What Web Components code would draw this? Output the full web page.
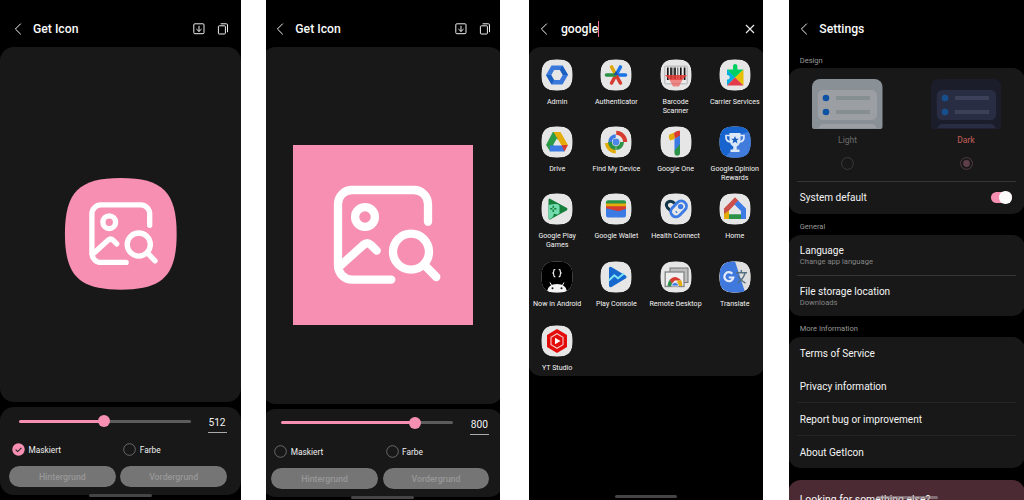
<!DOCTYPE html>
<html lang="en">
<head>
<meta charset="utf-8">
<title>Get Icon</title>
<style>
html,body{margin:0;background:#fff;width:1024px;height:500px;overflow:hidden;font-family:Roboto,"Liberation Sans",sans-serif;color:#fafafa}
screens-row{display:flex;height:500px}
</style>
</head>
<body>
<screens-row>
  <phone-frame style="--w:241px;--gap:24.7px;--inner:241px;--shift:0px">
    <icon-editor size="512" pos="49.3" masked></icon-editor>
  </phone-frame>
  <phone-frame style="--w:234.3px;--gap:29.4px;--inner:241px;--shift:-3.4px">
    <icon-editor size="800" pos="78" second></icon-editor>
  </phone-frame>
  <phone-frame style="--w:233.4px;--gap:26.7px;--inner:237px;--shift:-1.8px">
    <app-search></app-search>
  </phone-frame>
  <phone-frame style="--w:234.5px;--gap:0px;--inner:237px;--shift:-1.2px">
    <settings-page></settings-page>
  </phone-frame>
</screens-row>
<script>
const define=(name,css,html)=>customElements.define(name,class extends HTMLElement{
  connectedCallback(){
    if(this.shadowRoot)return;
    const r=this.attachShadow({mode:'open'});
    r.innerHTML=`<style>*{box-sizing:border-box}${css}</style>`+(typeof html==='function'?html(this):html);
  }
});

define('screens-row',':host{display:flex}','<slot></slot>');

define('phone-frame',`
:host{display:block;flex:none;width:var(--w);height:500px;margin-right:var(--gap);background:#000;overflow:hidden}
div{width:var(--inner);height:500px;margin-left:var(--shift)}`,'<div><slot></slot></div>');

define('top-bar',`
:host{display:flex;height:47px;padding:10px 12px 0 14px;align-items:center;flex:none}
.back{width:8px;height:12px;margin-right:var(--tg,11px);flex:none}
.t{font-size:12.2px;font-weight:500;line-height:16px;flex:1;white-space:nowrap;display:flex;align-items:center}
svg{fill:none;stroke:#f2f2f2;stroke-width:1;display:block}`,
`<svg class="back" viewBox="0 0 8 12"><path d="M6.8 .6 1.4 6 6.8 11.4"/></svg><span class="t"><slot></slot></span><slot name="actions"></slot>`);

// The app's glyph: picture frame with a magnifier, on a pink plate.
define('app-glyph',`:host{display:block}svg{display:block;width:100%;height:100%}`,
el=>`<svg viewBox="0 0 180 180">${el.hasAttribute('masked')
 ?'<path fill="#f68fb1" d="M90 3C155 3 177 25 177 90S155 177 90 177 3 155 3 90 25 3 90 3Z"/>'
 :'<path fill="#f68fb1" d="M0 0H180V180H0Z"/>'}
<g fill="none" stroke="#fff" stroke-width="8.3" stroke-linecap="round" stroke-linejoin="round">
<path d="M135 76.7V59a14 14 0 0 0-14-14H59a14 14 0 0 0-14 14V120.6a14 14 0 0 0 14 14H98.3"/>
<path d="M46 122 70.5 99.8Q74.3 96.7 78 100L83.7 105.6"/><circle cx="72" cy="72" r="9.9"/><circle cx="118" cy="106.7" r="18"/><path d="M131 119.5 143.3 132"/></g></svg>`);

define('check-dot',`
:host{display:flex;align-items:center;gap:3.5px;font-size:8.3px;line-height:12px;color:#f0f0f0}
svg{width:13px;height:13px;display:block}`,
el=>`<svg viewBox="0 0 13 13">${el.hasAttribute('on')
 ?'<circle cx="6.5" cy="6.5" r="6.2" fill="#f68fb1"/><path d="M3.6 6.6 5.7 8.6 9.4 4.8" fill="none" stroke="#222" stroke-width="1.1"/>'
 :'<circle cx="6.5" cy="6.5" r="5.8" fill="none" stroke="#8a8a8a" stroke-width=".7"/>'}</svg><slot></slot>`);

define('size-slider',`
:host{display:flex;align-items:center;width:171.5px;height:12px}
.t{flex:1;height:3px;border-radius:2px;background:linear-gradient(90deg,#f68fb1 var(--p),#5c5c5c var(--p));position:relative}
i{position:absolute;left:var(--p);top:-4.5px;width:12px;height:12px;margin-left:-6px;border-radius:50%;background:#f68fb1}`,
el=>`<div class="t" style="--p:${el.getAttribute('pos')}%"><i></i></div>`);

define('icon-editor',`
:host{display:flex;flex-direction:column;height:500px}
.acts{display:flex;gap:12px;align-items:center}
.acts svg{width:12px;height:12px;fill:none;stroke:#eee;stroke-width:1;display:block}
.stage{background:#181818;border-radius:14px;height:var(--sh);display:flex;justify-content:center;align-items:center;flex:none}
.panel{background:#181818;border-radius:14px;height:88px;margin-top:5px;flex:none;padding:8px 14px 0 9px}
.row{display:flex}
.num{margin-left:17px;width:19px;height:18px;font-size:10.2px;line-height:16px;text-align:center;border-bottom:1px solid #aaa;color:#f2f2f2}
.sl{padding:0 0 0 10px;height:19px}
.ck{padding-left:3px;margin-top:9.3px}
.ck>*{width:111.3px;flex:none}
.bt{gap:4.7px;margin-top:9.5px}
.bt span{flex:1;height:21px;border-radius:11px;background:#757575;color:#989898;font-size:8.8px;font-weight:500;line-height:22px;text-align:center}
.nav{width:63px;height:3px;border-radius:2px;background:#454545;margin:-1px 0 0 89px;flex:none;z-index:1}`,
el=>{const s=el.hasAttribute('second'),m=el.hasAttribute('masked');return `
<top-bar>Get Icon<div class="acts" slot="actions">
<svg viewBox="0 0 12 12"><rect x=".8" y=".8" width="10.2" height="9.9" rx="1"/><path d="M6 2.8V8.4M3.4 6 6 8.5 8.6 6"/></svg>
<svg viewBox="0 0 12 12"><rect x="1.4" y="2.8" width="7" height="8.2" rx=".8"/><path d="M3.6 .8H9.4a1.1 1.1 0 0 1 1.1 1.1V9.2"/></svg></div></top-bar>
<div class="stage" style="--sh:${s?'356.8':'355'}px"><app-glyph ${m?'masked':''} style="${m?'width:115.6px;height:115.6px;margin-top:19px':'width:180px;height:180px;margin-top:19px'}"></app-glyph></div>
<div class="panel"><div class="row sl"><size-slider pos="${el.getAttribute('pos')}"></size-slider><div class="num">${el.getAttribute('size')}</div></div>
<div class="row ck"><check-dot ${m?'on':''}>Maskiert</check-dot><check-dot>Farbe</check-dot></div>
<div class="row bt"><span>Hintergrund</span><span>Vordergrund</span></div></div>
<div class="nav"></div>`});

const SQ='M16 .3C27.6 .3 31.7 4.4 31.7 16S27.6 31.7 16 31.7 .3 27.6 .3 16 4.4 .3 16 .3Z';
const art={
admin:`<path fill="#3b78dc" d="M10.5 6.5H21.5L27 16 21.5 25.5H10.5L5 16Z"/><path fill="#1b5fc0" d="M5 16 11 16 13.2 21 10.5 25.5ZM21.5 6.5 27 16 21.4 16 18.8 11Z"/><path fill="#e6e6e6" d="M13.2 11H18.8L21.7 16 18.8 21H13.2L10.3 16Z"/>`,
auth:`<g stroke-width="3.6" stroke-linecap="round"><path stroke="#dfa60a" d="M16 16 11.6 8"/><path stroke="#1a73e8" d="M16 16 20.4 8M16 16H25.5"/><path stroke="#d63c30" d="M16 16 11.6 24M16 16 20.4 24"/><path stroke="#2b9248" d="M15 16H6.5"/></g><path fill="#174ea6" d="M13.8 16 16 12 18.2 16Z"/>`,
bar:`<rect x="4" y="6.5" width="24" height="19" rx="2" fill="#c2c2c2"/><rect x="5.5" y="8" width="21" height="16" fill="#ececec"/><path stroke="#151515" stroke-width="1.7" d="M7.8 8.5V21M11 8.5V21M15 8.5V21M20.8 8.5V21M24.6 8.5V21"/><path stroke="#151515" stroke-width=".8" d="M13 8.5V21M17.8 8.5V21"/><path fill="#e53935" fill-opacity=".85" d="M5 16H27L22 21H10Z"/><path fill="#ef5350" fill-opacity=".65" d="M9 20H23L19 27.5H13Z"/>`,
carrier:`<path fill="#00d063" d="M8 10.5H14V8a2.3 2.3 0 1 1 4.4 0v2.5H24.5L16 19Z"/><path fill="#00aee0" d="M8 10.5 16 18.5 8 26.5V20.5a2.3 2.3 0 1 0 0-4.5Z"/><path fill="#e7be00" d="M24.5 10.5V26.5L16 18.5Z"/><path fill="#e13a4b" d="M8 26.5 16 18.5 24.5 26.5Z"/>`,
drive:`<path fill="#2c9c49" d="M11.8 6H15.8L18.2 10.8 9.3 25.5 5 19Z"/><path fill="#e4ac09" d="M12.5 6H19.5L27 19H20.3Z"/><path fill="#e6e6e6" d="M15.8 12.5 19.6 19.2H12Z"/><path fill="#3d7be4" d="M9 19.5H23L23.5 25.5H8.7Z"/><path fill="#d63c30" d="M20.5 19H27L23.5 25.5Z"/>`,
find:`<g fill="none"><path stroke="#d63c30" stroke-width="4" d="M16 6.8A9.2 9.2 0 0 1 25.2 16"/><path stroke="#e4ac09" stroke-width="4" d="M6.8 17A9.2 9.2 0 0 0 16 25.4"/><path stroke="#3d7be4" stroke-width="3.6" d="M10 16A6 6 0 0 1 16 10"/><path stroke="#2c9248" stroke-width="4" d="M10 16A6 6 0 0 0 22 16"/></g><circle cx="16" cy="16" r="3.4" fill="#4b86e8"/><path stroke="#e6e6e6" stroke-width=".5" fill="none" d="M16 5V13M16 19V28"/>`,
one:`<path fill="#e4ac09" d="M9 8.8 14.5 6.5V13L10.3 14.6Q8 12 9 8.8Z"/><path fill="#d63c30" d="M14 7Q17 4 20 4.8V10L14.8 13Z"/><path fill="#3d7be4" d="M14.5 13 20 9.5V21L14.5 25Z"/><path fill="#2c9248" d="M14.5 24.5 20 18V27a2.7 2.7 0 0 1-5.5 0Z"/>`,
opinion:`<path fill="#1764cf" d="${SQ}"/><path fill="#417bdc" d="M32 5V32H5L13 24 22 8Z"/><path fill="#dce7f8" d="M10.5 7H21.5V14Q21 19 17.7 20.5V23.5H20.5V26H11.5V23.5H14.3V20.5Q11 19 10.5 14Z"/><path fill="none" stroke="#dce7f8" stroke-width="1.7" d="M11 9.5H7Q6.5 15.5 11.5 16M21 9.5H25Q25.5 15.5 20.5 16"/><path fill="#1a5dc0" d="m16 10 1.1 2.7 2.8.1-2.2 1.8.8 2.8-2.5-1.6-2.5 1.6.8-2.8-2.2-1.8 2.8-.1Z"/>`,
games:`<path fill="#157f3c" d="M8.5 5.5Q7.5 5.5 7.5 7V25Q8 27.5 10 26L26 17.2Q27 16 26 15Z"/><path fill="#72dbae" d="M7.5 12Q18 9.5 18.5 13V20Q17 22.5 13 20.5Q12 26 7.5 26Z"/><g stroke="#157f3c" stroke-width="1.5"><path d="M12.3 12.7V19M9.2 15.8H15.4"/></g><circle cx="12.3" cy="15.8" r="1" fill="#72dbae"/>`,
wallet:`<rect x="6" y="7.3" width="20" height="9" rx="2" fill="#2c9248"/><path fill="#e4ac09" d="M6 10.5H26V16H6Z"/><path fill="#d63c30" d="M6 13.3H26V19H6Z"/><path fill="#3d7be4" d="M6 15.2 18.5 18.2 26 15.8V22.5a2 2 0 0 1-2 2H8a2 2 0 0 1-2-2Z"/>`,
health:`<path fill="none" stroke="#123447" stroke-width="3" d="M12.5 19.5 7.5 14.8Q5 11.5 8 9 11.5 7 14.8 10.5"/><rect x="-9" y="-5.2" width="18" height="10.4" rx="5.2" fill="#e6e6e6" stroke="#3d7be4" stroke-width="2.9" transform="translate(18.6 15.9) rotate(-46)"/><circle cx="20.6" cy="13.6" r="2.7" fill="#3d7be4"/><path stroke="#3d7be4" stroke-width="1.3" d="M15.6 18.2 17.2 19.8"/>`,
home:`<path fill="#e4ac09" d="M5 17 10 15.5V26H5Z"/><path fill="#c9504b" d="M5 15.5 16 4.3 19.5 7.8 10 17.5 5 21Z"/><path fill="#3d7be4" d="M19 7.5 27 15.5V26H22V18L15.5 11.5Z"/><path fill="#2c9248" d="M10 21.3H22V26H10Z"/>`,
now:`<path fill="#000" d="${SQ}"/><g fill="none" stroke="#f2f2f2" stroke-width="1.2"><path d="M14.3 8.5Q12.7 8.3 12.8 10 12.9 11.8 11.5 12 12.9 12.3 12.8 14 12.7 15.8 14.3 15.6M17.7 8.5Q19.3 8.3 19.2 10 19.1 11.8 20.5 12 19.1 12.3 19.2 14 19.3 15.8 17.7 15.6"/></g><path fill="#f5f5f5" d="M6 30.5Q7 23 16 23T26 30.5Q16 33 6 30.5Z"/><path stroke="#f5f5f5" stroke-width="1" d="M9 21.5 11 25M23 21.5 21 25"/><circle cx="11.5" cy="27.3" r="1" fill="#111"/><circle cx="20.5" cy="27.3" r="1" fill="#111"/>`,
play:`<path fill="#1668cf" d="M9 7.5Q9 5 11.3 6L26 14.8Q27.3 16 26 17.2L11.5 26Q9 27 9 24.5Z"/><path fill="none" stroke="#7ee4f2" stroke-width="2" d="M8.8 19.5 14.3 14.3 18 17.3 24 12.5"/>`,
remote:`<rect x="10" y="7" width="18" height="14.5" fill="#bdbdbd" stroke="#777" stroke-width="1"/><rect x="5.2" y="11" width="18.8" height="14.5" fill="#efefef" stroke="#858585" stroke-width="1.3"/><path fill="#2c9248" d="M7.5 25Q7.5 21 10 18.5L13.8 25Z"/><path fill="#d63c30" d="M9.7 18.7Q15 12.7 21.3 19.5H14.8L12 22.5Z"/><path fill="#e4ac09" d="M17.5 19.5H21.3Q22.5 22 22.2 25H17Z"/><path fill="#3d7be4" stroke="#eee" stroke-width=".8" d="M11.6 25a3.5 3.5 0 0 1 7 0Z"/>`,
trans:`<path fill="#dedede" d="${SQ}"/><path fill="#4079dd" d="M14 .3H16L26 31Q21 32 16 31.7 4.4 31.7 .8 24V9Q4 .3 14 .3Z"/><path fill="none" stroke="#e5edfa" stroke-width="2.2" d="M13.3 12.8A4.5 4.5 0 1 0 14.3 16.5H9.8"/><path fill="none" stroke="#566f80" stroke-width="1.4" d="M17 11.8H28M22.3 9V12M26 12Q24.5 18 18.5 22M19 14.5Q22 20 26.5 22"/>`,
yt:`<path fill="#e40b0b" d="M16 4 26 10V22L16 28 6 22V10Z"/><path fill="none" stroke="#f6caca" stroke-width="1.1" d="M16 8.7 22 12.3V19.7L16 23.3 10 19.7V12.3Z"/><path fill="#fff" d="M14 12.8 19.5 16 14 19.2Z"/>`};

define('app-tile',`
:host{display:flex;flex-direction:column;align-items:center;font-size:7.1px;line-height:9px;color:#f4f4f4;text-align:center}
svg{width:32px;height:32px;display:block;margin-bottom:6px}
span{width:70px;white-space:pre-line;display:block}`,
el=>`<svg viewBox="0 0 32 32"><clipPath id="c"><path d="${SQ}"/></clipPath><g clip-path="url(#c)"><path fill="#e6e6e6" d="${SQ}"/>${art[el.getAttribute('icon')]}</g></svg><span><slot></slot></span>`);

define('app-search',`
:host{display:flex;flex-direction:column;height:500px}
top-bar{padding-left:12px;--tg:13.3px}
i{width:1px;height:16px;background:#f06d94;margin-left:.3px}
.x{width:10px;height:10px;fill:none;stroke:#eee;stroke-width:1.1;margin-right:-2.5px}
.card{background:#181818;border-radius:13px;height:329px;display:grid;grid-template-columns:repeat(4,59.2px);grid-template-rows:67.2px 67.2px 67.4px 63.9px 50px;padding-top:12px;align-content:start;flex:none}
.nav{width:62px;height:3px;border-radius:2px;background:#454545;margin:119px 0 0 87px;flex:none}`,
`<top-bar>google<i></i><svg slot="actions" class="x" viewBox="0 0 10 10"><path d="M1 1 9 9M9 1 1 9"/></svg></top-bar><div class="card">`+
[['admin','Admin'],['auth','Authenticator'],['bar','Barcode\nScanner'],['carrier','Carrier Services'],['drive','Drive'],['find','Find My Device'],['one','Google One'],['opinion','Google Opinion\nRewards'],['games','Google Play\nGames'],['wallet','Google Wallet'],['health','Health Connect'],['home','Home'],['now','Now in Android'],['play','Play Console'],['remote','Remote Desktop'],['trans','Translate'],['yt','YT Studio']].map(a=>`<app-tile icon="${a[0]}">${a[1]}</app-tile>`).join('')+`</div><div class="nav"></div>`);

define('theme-choice',`
:host{display:flex;flex-direction:column;align-items:center;width:119px;font-size:8.5px;line-height:12px}
.pic{width:70.5px;height:50px;display:block;margin-bottom:5px}
.r{width:13px;height:13px;display:block;margin-top:10.5px}`,
el=>{const d=el.hasAttribute('dark'),c=d?['#1c1d2b','#292d44','#3d4059','#174f8c']:['#899196','#9b9fa3','#858f92','#0f52a4'];return `
<svg class="pic" viewBox="0 0 70.5 50"><path fill="${c[0]}" d="M0 8a8 8 0 0 1 8-8H62.5a8 8 0 0 1 8 8V48a2 2 0 0 1-2 2H2a2 2 0 0 1-2-2Z"/><rect x="5.8" y="11" width="59.2" height="30" rx="5.5" fill="${c[1]}"/><path fill="${c[1]}" d="M6.5 49.3Q7.5 45 12 45H59Q63.5 45 64.5 49.3Z"/><g fill="${c[3]}"><circle cx="14" cy="19" r="3.3"/><circle cx="14" cy="33" r="3.3"/></g><path fill="${c[2]}" d="M24 17H58V21H24ZM24 31H58V35H24Z"/></svg>
<span style="color:${d?'#a9534f;font-weight:500':'#6b6b6b'}"><slot></slot></span>
<svg class="r" viewBox="0 0 13 13"><circle cx="6.5" cy="6.5" r="5.9" fill="none" stroke="${d?'#624550':'#444'}" stroke-width=".8"/>${d?'<circle cx="6.5" cy="6.5" r="3.4" fill="#5d3e49"/>':''}</svg>`});

define('list-item',`
:host{display:flex;flex-direction:column;justify-content:center;font-size:10.05px;line-height:13px;margin:0 9px 0 8.5px;padding-left:3px;color:#f4f4f4;white-space:nowrap}
small{font-size:7.6px;line-height:10px;color:#858585}small:empty{display:none}`,
el=>`<span><slot></slot></span><small>${el.getAttribute('note')||''}</small>`);

define('settings-page',`
:host{display:flex;flex-direction:column;height:500px;overflow:hidden;position:relative}
top-bar{padding-left:12px}
h4{margin:0 0 0 11.5px;font-size:7.5px;font-weight:400;line-height:10px;color:#999;flex:none}
.card{background:#181818;border-radius:13px;flex:none;overflow:hidden}
.themes{display:flex;height:112.5px;padding-top:11px}
hr{border:0;height:1px;background:#363636;margin:0 9px 0 8.5px}
hr.f{background:#252525}
.sys{display:flex;align-items:center;justify-content:space-between;height:32px}
.sw{width:21px;height:11px;border-radius:6px;background:#f68fb1;display:flex;justify-content:flex-end;align-items:center;margin-right:13.5px}
.sw i{width:12.5px;height:12.5px;border-radius:50%;background:#fafafa;flex:none}
.two{padding-top:2px}
.promo{background:#4b2a33;border-radius:13px;margin-top:12px;height:60px;padding:13px 0 0 11.5px;font-size:10.4px;line-height:14px;flex:none}
.nav{position:absolute;left:87.3px;bottom:1px;width:62.5px;height:2.6px;border-radius:2px;background:#a69da0;opacity:.6}`,
`<top-bar>Settings</top-bar>
<h4 style="margin-top:8.5px">Design</h4>
<div class="card" style="margin-top:2.5px;height:145.7px"><div class="themes"><theme-choice>Light</theme-choice><theme-choice dark>Dark</theme-choice></div><hr><div class="sys"><list-item>System default</list-item><span class="sw"><i></i></span></div></div>
<h4 style="margin-top:8.3px">General</h4>
<div class="card" style="margin-top:3px;height:80.7px"><list-item class="two" note="Change app language" style="height:40px">Language</list-item><hr><list-item class="two" note="Downloads" style="height:40px">File storage location</list-item></div>
<h4 style="margin-top:8.3px">More Information</h4>
<div class="card" style="margin-top:3px;height:131px"><list-item style="height:33px">Terms of Service</list-item><list-item style="height:32px;padding-top:1px">Privacy information</list-item><hr class="f"><list-item style="height:32px;padding-top:1px">Report bug or improvement</list-item><hr class="f"><list-item style="height:32px;padding-top:1px">About GetIcon</list-item></div>
<div class="promo">Looking for something else?</div><div class="nav"></div>`);
</script>
</body>
</html>
